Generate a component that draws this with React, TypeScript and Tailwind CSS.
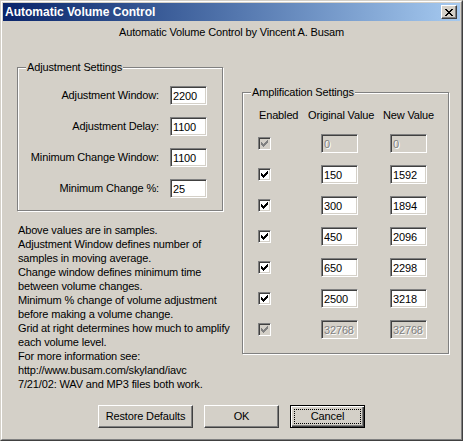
import React from "react";

const CHECK: [number, number][] = [
  [6, 0], [5, 1], [6, 1], [0, 2], [4, 2], [5, 2], [6, 2],
  [0, 3], [1, 3], [3, 3], [4, 3], [5, 3],
  [0, 4], [1, 4], [2, 4], [3, 4], [4, 4],
  [1, 5], [2, 5], [3, 5], [2, 6],
];

const CLOSE = ["XX....XX", ".XX..XX.", "..XXXX..", "...XX...", "..XXXX..", ".XX..XX.", "XX....XX"];

function CloseGlyph() {
  return (
    <svg width="8" height="7" viewBox="0 0 8 7" shapeRendering="crispEdges">
      {CLOSE.flatMap((row, y) =>
        row.split("").map((c, x) => (c === "X" ? <rect key={`${x}-${y}`} x={x} y={y} width="1" height="1" fill="#000" /> : null))
      )}
    </svg>
  );
}

function CheckBox({ disabled }: { disabled?: boolean }) {
  return (
    <div
      className={`flex h-[13px] w-[13px] items-center justify-center border border-t-[#808080] border-l-[#808080] border-r-white border-b-white shadow-[inset_1px_1px_0_#404040,inset_-1px_-1px_0_#d4d0c8] ${
        disabled ? "bg-[#d4d0c8]" : "bg-white"
      }`}
    >
      <svg width="7" height="7" viewBox="0 0 7 7" shapeRendering="crispEdges">
        {CHECK.map(([x, y]) => (
          <rect key={`${x}-${y}`} x={x} y={y} width="1" height="1" fill={disabled ? "#808080" : "#000"} />
        ))}
      </svg>
    </div>
  );
}

function Field({ value, disabled }: { value: string; disabled?: boolean }) {
  return (
    <input
      readOnly
      value={value}
      disabled={disabled}
      className={`h-[19px] w-[37px] border border-t-[#808080] border-l-[#808080] border-r-white border-b-white px-[2px] text-[11px] leading-[13px] outline-none shadow-[inset_1px_1px_0_#404040,inset_-1px_-1px_0_#d4d0c8] ${
        disabled ? "bg-[#d4d0c8] text-[#808080] [text-shadow:1px_1px_0_#fff]" : "bg-white text-black"
      }`}
    />
  );
}

function Button({ label, width, isDefault }: { label: string; width: string; isDefault?: boolean }) {
  if (isDefault) {
    return (
      <button
        className={`flex h-[23px] ${width} border border-black bg-[#d4d0c8] p-[3px] text-[11px] text-black shadow-[inset_1px_1px_0_#fff,inset_-1px_-1px_0_#404040,inset_-2px_-2px_0_#808080]`}
      >
        <span className="flex flex-1 items-center justify-center border border-dotted border-black leading-[13px]">{label}</span>
      </button>
    );
  }
  return (
    <button
      className={`flex h-[23px] ${width} items-center justify-center border border-t-white border-l-white border-r-[#404040] border-b-[#404040] bg-[#d4d0c8] text-[11px] leading-[13px] text-black shadow-[inset_-1px_-1px_0_#808080]`}
    >
      {label}
    </button>
  );
}

const adjustments = [
  { label: "Adjustment Window:", value: "2200" },
  { label: "Adjustment Delay:", value: "1100" },
  { label: "Minimum Change Window:", value: "1100" },
  { label: "Minimum Change %:", value: "25" },
];

const amps = [
  { orig: "0", next: "0", disabled: true },
  { orig: "150", next: "1592" },
  { orig: "300", next: "1894" },
  { orig: "450", next: "2096" },
  { orig: "650", next: "2298" },
  { orig: "2500", next: "3218" },
  { orig: "32768", next: "32768", disabled: true },
];

const notes = [
  "Above values are in samples.",
  "Adjustment Window defines number of",
  "samples in moving average.",
  "Change window defines minimum time",
  "between volume changes.",
  "Minimum % change of volume adjustment",
  "before making a volume change.",
  "Grid at right determines how much to amplify",
  "each volume level.",
  "For more information see:",
  "http://www.busam.com/skyland/iavc",
  "7/21/02: WAV and MP3 files both work.",
];

export default function App() {
  return (
    <div className="h-[441px] w-[463px] border border-t-[#d4d0c8] border-l-[#d4d0c8] border-r-[#404040] border-b-[#404040] bg-[#d4d0c8] font-['Liberation_Sans',Arial,sans-serif] text-[11px] tracking-[-0.15px] text-black">
      <div className="flex h-full flex-col border border-t-white border-l-white border-r-[#808080] border-b-[#808080] p-px">
        {/* caption */}
        <div className="flex h-[18px] items-center justify-between bg-linear-to-r from-[#0a246a] to-[#a6caf0] pr-[3px] pl-[2px]">
          <span className="text-[12px] leading-[14px] font-bold tracking-normal text-white">Automatic Volume Control</span>
          <div className="flex h-[14px] w-[16px] items-center justify-center border border-t-white border-l-white border-r-[#404040] border-b-[#404040] bg-[#d4d0c8] shadow-[inset_-1px_-1px_0_#808080]">
            <CloseGlyph />
          </div>
        </div>

        <p className="mt-[5px] text-center leading-[13px]">Automatic Volume Control by Vincent A. Busam</p>

        <div className="flex items-start">
          {/* left column */}
          <div className="mt-[22px] ml-[14px] w-[206px]">
            <fieldset className="border border-[#808080] pt-[12px] pb-[12px] shadow-[inset_1px_1px_0_#fff,1px_1px_0_#fff]">
              <legend className="ml-[8px] bg-[#d4d0c8] px-px leading-[13px]">Adjustment Settings</legend>
              <div className="grid grid-cols-[141px_37px] items-center gap-x-[11px] gap-y-[12px]">
                {adjustments.map((a) => (
                  <React.Fragment key={a.label}>
                    <span className="text-right leading-[13px]">{a.label}</span>
                    <Field value={a.value} />
                  </React.Fragment>
                ))}
              </div>
            </fieldset>
            <div className="mt-[12px] pl-px leading-[14px]">
              {notes.map((n) => (
                <div key={n} className="whitespace-nowrap">{n}</div>
              ))}
            </div>
          </div>

          {/* right column */}
          <div className="mt-[47px] ml-[19px] w-[207px]">
            <fieldset className="border border-[#808080] pt-[10px] pb-[14px] shadow-[inset_1px_1px_0_#fff,1px_1px_0_#fff]">
              <legend className="ml-[8px] bg-[#d4d0c8] px-px leading-[13px]">Amplification Settings</legend>
              <div className="flex pl-[16px] leading-[13px]">
                <span className="w-[49px]">Enabled</span>
                <span className="w-[75px]">Original Value</span>
                <span>New Value</span>
              </div>
              <div className="mt-[12px] grid grid-cols-[63px_69px_37px] items-center gap-y-[12px] pl-[15px]">
                {amps.map((r, i) => (
                  <React.Fragment key={i}>
                    <CheckBox disabled={r.disabled} />
                    <Field value={r.orig} disabled={r.disabled} />
                    <Field value={r.next} disabled={r.disabled} />
                  </React.Fragment>
                ))}
              </div>
            </fieldset>
          </div>
        </div>

        <div className="mt-[14px] flex gap-[11px] pl-[95px]">
          <Button label="Restore Defaults" width="w-[95px]" />
          <Button label="OK" width="w-[75px]" />
          <Button label="Cancel" width="w-[75px]" isDefault />
        </div>
      </div>
    </div>
  );
}
